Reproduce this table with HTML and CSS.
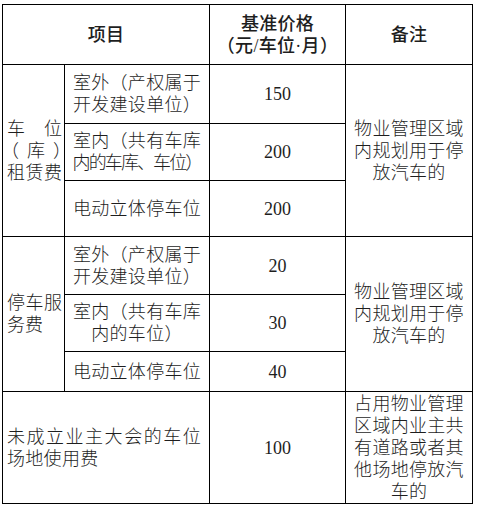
FILE: index.html
```html
<!DOCTYPE html>
<html lang="zh-CN">
<head>
<meta charset="utf-8">
<title>停车收费标准</title>
<link rel="stylesheet" href="styles.css">
</head>
<body>
<table class="fee-table">
  <colgroup>
    <col class="c-cat">
    <col class="c-item">
    <col class="c-price">
    <col class="c-note">
  </colgroup>
  <thead>
    <tr class="r-head">
      <th colspan="2">项目</th>
      <th>基准价格<br>（元/车位·月）</th>
      <th>备注</th>
    </tr>
  </thead>
  <tbody>
    <tr class="r1">
      <td rowspan="3" class="cat"><span class="jl">车位</span><span class="jl paren">（库）</span><span class="jl">租赁费</span></td>
      <td class="item"><span class="ln">室外（产权属于</span><span class="ln">开发建设单位）</span></td>
      <td class="price">150</td>
      <td rowspan="3" class="note">物业管理区域内规划用于停放汽车的</td>
    </tr>
    <tr class="r2">
      <td class="item"><span class="ln">室内（共有车库</span><span class="ln tight">内的车库、车位）</span></td>
      <td class="price">200</td>
    </tr>
    <tr class="r3">
      <td class="item"><span class="ln">电动立体停车位</span></td>
      <td class="price">200</td>
    </tr>
    <tr class="r4">
      <td rowspan="3" class="cat">停车服务费</td>
      <td class="item"><span class="ln">室外（产权属于</span><span class="ln">开发建设单位）</span></td>
      <td class="price">20</td>
      <td rowspan="3" class="note">物业管理区域内规划用于停放汽车的</td>
    </tr>
    <tr class="r5">
      <td class="item"><span class="ln">室内（共有车库</span><span class="ln">内的车位）</span></td>
      <td class="price">30</td>
    </tr>
    <tr class="r6">
      <td class="item"><span class="ln">电动立体停车位</span></td>
      <td class="price">40</td>
    </tr>
    <tr class="r7">
      <td colspan="2" class="wide">未成立业主大会的车位场地使用费</td>
      <td class="price">100</td>
      <td class="note">占用物业管理区域内业主共有道路或者其他场地停放汽车的</td>
    </tr>
  </tbody>
</table>
</body>
</html>
```

FILE: styles.css
```css
html, body {
  margin: 0;
  padding: 0;
  background: #ffffff;
}

body {
  padding: 4px 0 0 2px;
}

.fee-table {
  border-collapse: collapse;
  table-layout: fixed;
  width: 470px;
  font-family: "Liberation Serif", "Noto Sans CJK SC", serif;
  font-size: 18px;
  line-height: 22px;
  color: #1e1e1e;
  letter-spacing: 0.3px;
}

.c-cat { width: 62px; }
.c-item { width: 145px; }
.c-price { width: 136px; }
.c-note { width: 127px; }

.fee-table th,
.fee-table td {
  border: 1px solid #000;
  padding: 0 6px;
  vertical-align: middle;
  text-align: center;
}

.fee-table td {
  font-weight: 300;
}

.fee-table th {
  font-weight: 500;
}

.r-head { height: 60px; }
.r1 { height: 59px; }
.r2 { height: 57px; }
.r3 { height: 56px; }
.r4 { height: 58px; }
.r5 { height: 57px; }
.r6 { height: 40px; }
.r7 { height: 112px; }

.fee-table td.cat {
  text-align: justify;
  padding: 0 2px 0 4px;
  letter-spacing: 0;
}

.jl {
  display: block;
  text-align: justify;
  text-align-last: justify;
  white-space: nowrap;
}

.jl.paren {
  font-feature-settings: "halt" 1;
  padding: 0 0 0 3px;
}

.fee-table td.item {
  padding: 0 2px;
}

.ln {
  display: block;
  white-space: nowrap;
}

.ln.tight {
  letter-spacing: -1.9px;
}

.fee-table td.wide {
  text-align: justify;
  padding: 0 8px 0 4px;
}

.fee-table td.price {
  letter-spacing: 0;
}

.fee-table td.note {
  padding: 0 7px;
}
```
